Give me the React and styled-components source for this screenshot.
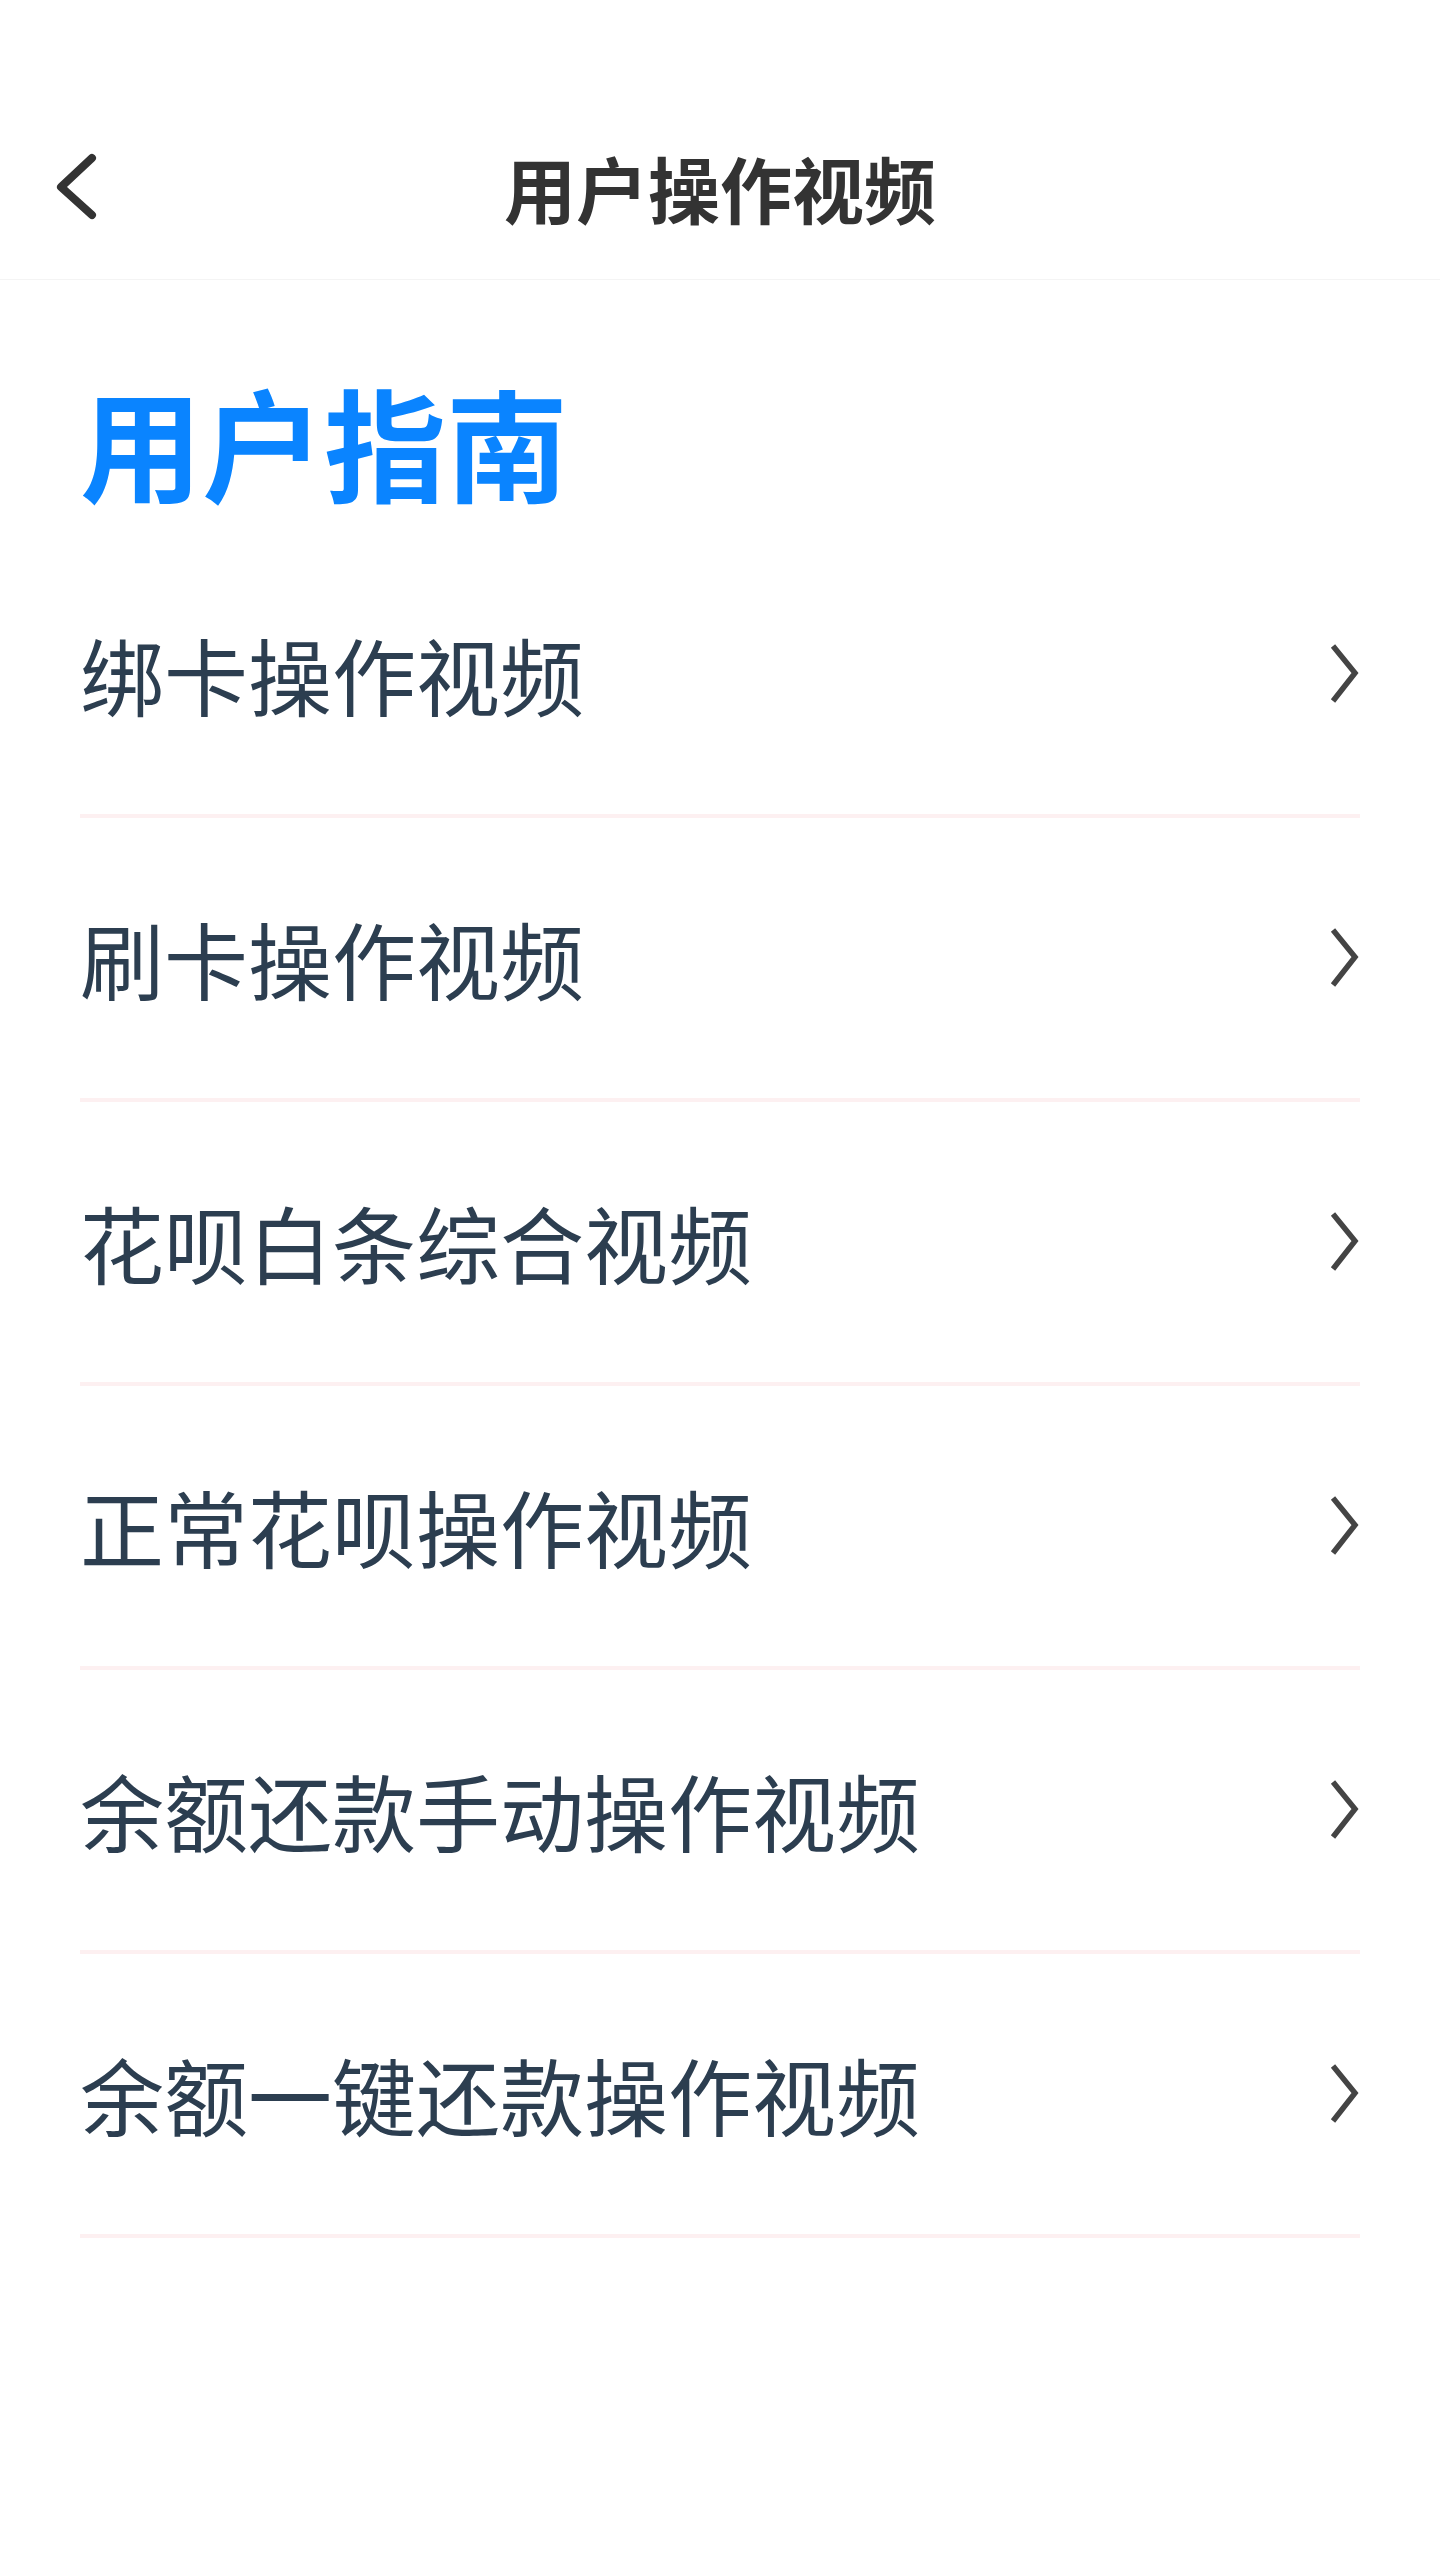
import React from "react";
import styled, { createGlobalStyle } from "styled-components";

const GlobalStyle = createGlobalStyle`
  html, body {
    margin: 0;
    padding: 0;
    background: #ffffff;
  }
  body {
    font-family: "Noto Sans CJK SC", "Noto Sans", sans-serif;
  }
  * { box-sizing: border-box; }
`;

const Page = styled.div`
  width: 1440px;
  min-height: 2560px;
  background: #ffffff;
`;

const Header = styled.header`
  padding-top: 94px;
  border-bottom: 1px solid #f4f4f4;
`;

const NavBar = styled.div`
  position: relative;
  height: 185px;
  display: flex;
  align-items: center;
  justify-content: center;
`;

const BackButton = styled.button`
  position: absolute;
  left: 56px;
  top: 50%;
  transform: translateY(-50%);
  width: 44px;
  height: 72px;
  padding: 0;
  border: none;
  background: transparent;
  display: flex;
  align-items: center;
  justify-content: center;
`;

const NavTitle = styled.h1`
  margin: 0;
  font-size: 72px;
  line-height: 72px;
  font-weight: 700;
  color: #333333;
`;

const Content = styled.main`
  padding: 0 80px;
`;

const SectionTitle = styled.h2`
  margin: 99px 0 33px;
  font-size: 122px;
  line-height: 122px;
  font-weight: 700;
  color: #0a84ff;
`;

const List = styled.ul`
  list-style: none;
  margin: 0;
  padding: 0;
`;

const Row = styled.li`
  height: 284px;
  display: flex;
  align-items: center;
  justify-content: space-between;
  border-bottom: 4px solid #fdf0f1;
`;

const RowLabel = styled.span`
  font-size: 84px;
  line-height: 84px;
  font-weight: 400;
  color: #2c3e50;
`;

const Chevron = styled.svg`
  display: block;
  width: 32px;
  height: 60px;
  overflow: visible;
`;

const items = [
  "绑卡操作视频",
  "刷卡操作视频",
  "花呗白条综合视频",
  "正常花呗操作视频",
  "余额还款手动操作视频",
  "余额一键还款操作视频",
];

export default function App() {
  return (
    <Page>
      <GlobalStyle />
      <Header>
        <NavBar>
          <BackButton aria-label="返回">
            <svg width="44" height="72" viewBox="0 0 44 72">
              <polyline
                points="36,7 5,36 36,64"
                fill="none"
                stroke="#333333"
                strokeWidth="8"
                strokeLinecap="round"
                strokeLinejoin="round"
              />
            </svg>
          </BackButton>
          <NavTitle>用户操作视频</NavTitle>
        </NavBar>
      </Header>
      <Content>
        <SectionTitle>用户指南</SectionTitle>
        <List>
          {items.map((t) => (
            <Row key={t}>
              <RowLabel>{t}</RowLabel>
              <Chevron viewBox="0 0 32 60">
                <polyline
                  points="5,2 27,29 5,57"
                  fill="none"
                  stroke="#444444"
                  strokeWidth="5.5"
                  strokeLinejoin="miter"
                />
              </Chevron>
            </Row>
          ))}
        </List>
      </Content>
    </Page>
  );
}
